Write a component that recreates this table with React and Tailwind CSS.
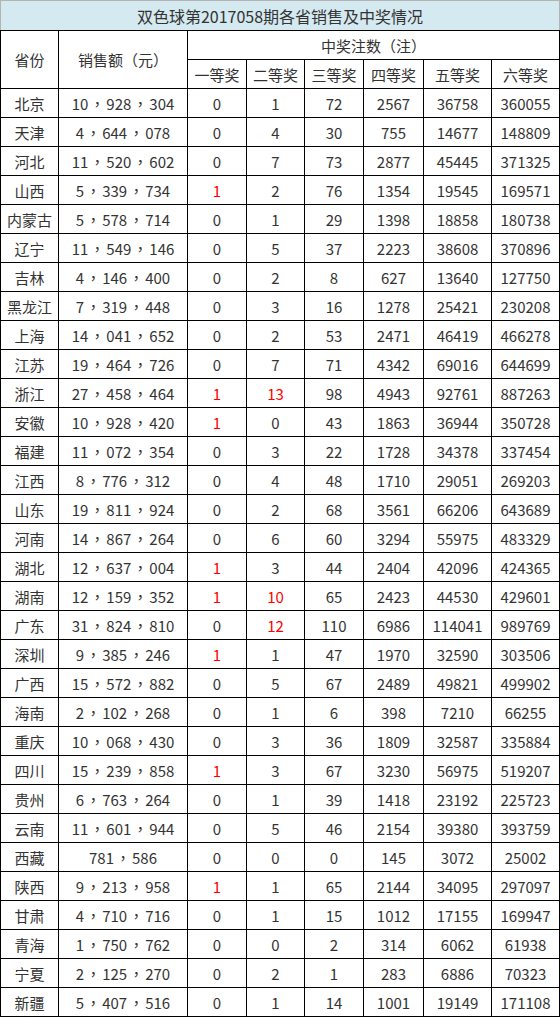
import React from "react";

const rows = [
  ["北京", "10，928，304", 0, 1, 72, 2567, 36758, 360055],
  ["天津", "4，644，078", 0, 4, 30, 755, 14677, 148809],
  ["河北", "11，520，602", 0, 7, 73, 2877, 45445, 371325],
  ["山西", "5，339，734", 1, 2, 76, 1354, 19545, 169571],
  ["内蒙古", "5，578，714", 0, 1, 29, 1398, 18858, 180738],
  ["辽宁", "11，549，146", 0, 5, 37, 2223, 38608, 370896],
  ["吉林", "4，146，400", 0, 2, 8, 627, 13640, 127750],
  ["黑龙江", "7，319，448", 0, 3, 16, 1278, 25421, 230208],
  ["上海", "14，041，652", 0, 2, 53, 2471, 46419, 466278],
  ["江苏", "19，464，726", 0, 7, 71, 4342, 69016, 644699],
  ["浙江", "27，458，464", 1, 13, 98, 4943, 92761, 887263],
  ["安徽", "10，928，420", 1, 0, 43, 1863, 36944, 350728],
  ["福建", "11，072，354", 0, 3, 22, 1728, 34378, 337454],
  ["江西", "8，776，312", 0, 4, 48, 1710, 29051, 269203],
  ["山东", "19，811，924", 0, 2, 68, 3561, 66206, 643689],
  ["河南", "14，867，264", 0, 6, 60, 3294, 55975, 483329],
  ["湖北", "12，637，004", 1, 3, 44, 2404, 42096, 424365],
  ["湖南", "12，159，352", 1, 10, 65, 2423, 44530, 429601],
  ["广东", "31，824，810", 0, 12, 110, 6986, 114041, 989769],
  ["深圳", "9，385，246", 1, 1, 47, 1970, 32590, 303506],
  ["广西", "15，572，882", 0, 5, 67, 2489, 49821, 499902],
  ["海南", "2，102，268", 0, 1, 6, 398, 7210, 66255],
  ["重庆", "10，068，430", 0, 3, 36, 1809, 32587, 335884],
  ["四川", "15，239，858", 1, 3, 67, 3230, 56975, 519207],
  ["贵州", "6，763，264", 0, 1, 39, 1418, 23192, 225723],
  ["云南", "11，601，944", 0, 5, 46, 2154, 39380, 393759],
  ["西藏", "781，586", 0, 0, 0, 145, 3072, 25002],
  ["陕西", "9，213，958", 1, 1, 65, 2144, 34095, 297097],
  ["甘肃", "4，710，716", 0, 1, 15, 1012, 17155, 169947],
  ["青海", "1，750，762", 0, 0, 2, 314, 6062, 61938],
  ["宁夏", "2，125，270", 0, 2, 1, 283, 6886, 70323],
  ["新疆", "5，407，516", 0, 1, 14, 1001, 19149, 171108],
];

const cell = "bg-white flex items-center justify-center whitespace-nowrap";

function Amount({ text }) {
  const parts = text.split("，");
  return (
    <span className="flex items-center">
      {parts.map((p, i) => (
        <React.Fragment key={i}>
          {i > 0 && (
            <span className="inline-block w-[18px] text-center font-['Noto_Sans_CJK_TC','Noto_Sans_CJK_SC',sans-serif]">
              <span className="inline-block w-[15px]">，</span>
            </span>
          )}
          <span>{p}</span>
        </React.Fragment>
      ))}
    </span>
  );
}

export default function App() {
  return (
    <div className="w-[560px] h-[1019px] bg-white font-['Noto_Sans_CJK_SC','Noto_Sans',sans-serif] text-[#333333] text-[15px] leading-none">
      <div className="h-[30px] bg-[#d4e9f0] border-t border-l border-r border-[#b4b4b4] flex items-center justify-center text-[16px]">
        双色球第2017058期各省销售及中奖情况
      </div>
      <div className="grid grid-cols-[57px_128px_58px_57px_58px_59px_67px_67px] auto-rows-[28px] gap-px p-px bg-black">
        <div className={`${cell} row-span-2`}>省份</div>
        <div className={`${cell} row-span-2`}>销售额（元）</div>
        <div className={`${cell} col-span-6`}>中奖注数（注）</div>
        {["一等奖", "二等奖", "三等奖", "四等奖", "五等奖", "六等奖"].map((h) => (
          <div key={h} className={cell}>{h}</div>
        ))}
        {rows.map((r) => (
          <React.Fragment key={r[0]}>
            <div className={cell}>{r[0]}</div>
            <div className={cell}><Amount text={r[1]} /></div>
            <div className={`${cell} ${r[2] > 0 ? "text-[#ff0000]" : ""}`}>{r[2]}</div>
            <div className={`${cell} ${r[3] >= 10 ? "text-[#ff0000]" : ""}`}>{r[3]}</div>
            <div className={cell}>{r[4]}</div>
            <div className={cell}>{r[5]}</div>
            <div className={cell}>{r[6]}</div>
            <div className={cell}>{r[7]}</div>
          </React.Fragment>
        ))}
      </div>
    </div>
  );
}
